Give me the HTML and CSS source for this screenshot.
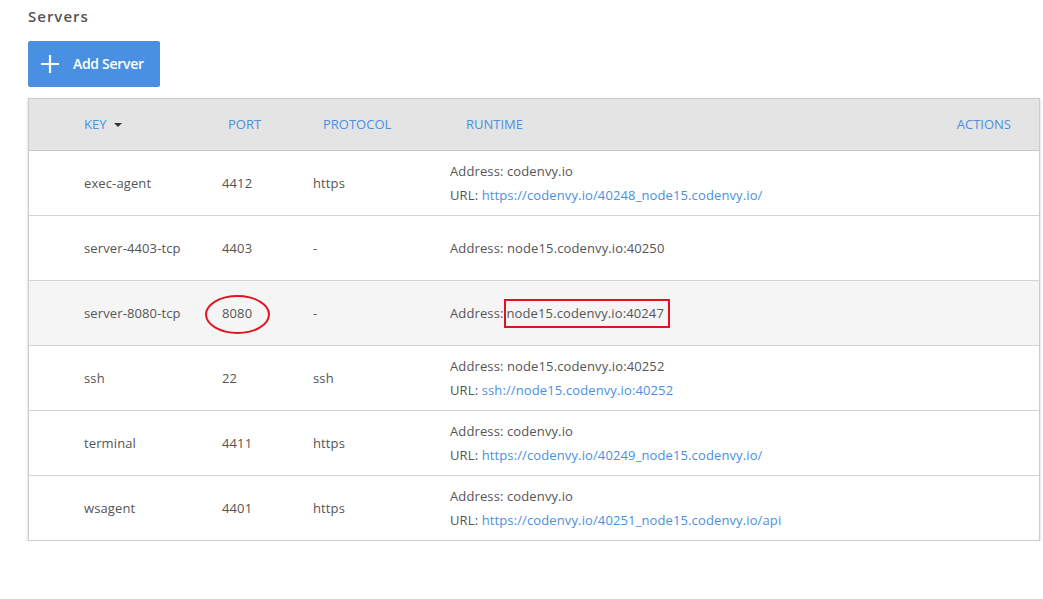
FILE: index.html
```html
<!DOCTYPE html>
<html>
<head>
<meta charset="utf-8">
<link rel="stylesheet" href="styles.css">
</head>
<body>
<div class="page">
  <h1 class="title">Servers</h1>
  <button class="add-btn"><svg class="plus" width="20" height="20" viewBox="0 0 20 20"><path d="M10 1v18M1 10h18" stroke="#fff" stroke-width="2.2" fill="none"/></svg><span>Add Server</span></button>
  <div class="table">
    <div class="head">
      <div class="h-key">KEY <span class="caret"></span></div>
      <div class="h-port">PORT</div>
      <div class="h-proto">PROTOCOL</div>
      <div class="h-run">RUNTIME</div>
      <div class="h-act">ACTIONS</div>
    </div>
    <div class="row">
      <div class="c-key">exec-agent</div>
      <div class="c-port">4412</div>
      <div class="c-proto">https</div>
      <div class="c-run"><div>Address: codenvy.io</div><div>URL: <a>https://codenvy.io/40248_node15.codenvy.io/</a></div></div>
    </div>
    <div class="row">
      <div class="c-key">server-4403-tcp</div>
      <div class="c-port">4403</div>
      <div class="c-proto">-</div>
      <div class="c-run"><div>Address: node15.codenvy.io:40250</div></div>
    </div>
    <div class="row hover">
      <div class="c-key">server-8080-tcp</div>
      <div class="c-port"><span class="circled">8080</span></div>
      <div class="c-proto">-</div>
      <div class="c-run"><div>Address:<span class="boxed">node15.codenvy.io:40247</span></div></div>
    </div>
    <div class="row">
      <div class="c-key">ssh</div>
      <div class="c-port">22</div>
      <div class="c-proto">ssh</div>
      <div class="c-run"><div>Address: node15.codenvy.io:40252</div><div>URL: <a>ssh://node15.codenvy.io:40252</a></div></div>
    </div>
    <div class="row">
      <div class="c-key">terminal</div>
      <div class="c-port">4411</div>
      <div class="c-proto">https</div>
      <div class="c-run"><div>Address: codenvy.io</div><div>URL: <a>https://codenvy.io/40249_node15.codenvy.io/</a></div></div>
    </div>
    <div class="row last">
      <div class="c-key">wsagent</div>
      <div class="c-port">4401</div>
      <div class="c-proto">https</div>
      <div class="c-run"><div>Address: codenvy.io</div><div>URL: <a>https://codenvy.io/40251_node15.codenvy.io/api</a></div></div>
    </div>
  </div>
</div>
</body>
</html>
```
FILE: styles.css
```css
* { box-sizing: border-box; }
html, body { margin: 0; padding: 0; background: #fff; }
body { font-family: "Open Sans", "Liberation Sans", sans-serif; color: #555; }
.page { padding: 5px 4px 0 28px; }
.title {
  margin: 0;
  font-size: 15px;
  font-weight: 600;
  letter-spacing: 1px;
  color: #555;
  line-height: 22px;
}
.add-btn {
  margin-top: 14px;
  display: flex;
  align-items: center;
  height: 46px;
  width: 132px;
  padding: 0 0 0 12px;
  border: none;
  border-radius: 2px;
  background: #4a90e2;
  color: #fff;
  font-family: "Open Sans", "Liberation Sans", sans-serif;
  font-size: 14px;
  font-weight: 600;
  letter-spacing: -0.3px;
  padding-bottom: 1px;
}
.plus { margin-right: 13px; }
.table {
  margin-top: 11px;
  width: 1012px;
  border: 1px solid #ccc;
  box-shadow: 0 1px 3px rgba(0,0,0,0.18);
  font-size: 13px;
  letter-spacing: 0.12px;
}
.head {
  display: grid;
  grid-template-columns: 144px 95px 143px 490px 1fr;
  height: 52px;
  align-items: center;
  background: #e4e4e4;
  border-bottom: 1px solid #c8c8c8;
  color: #4a90e2;
  padding-left: 55px;
  padding-bottom: 2px;
  letter-spacing: 0;
}
.h-act { text-align: right; padding-right: 28px; }
.caret {
  display: inline-block;
  width: 0; height: 0;
  border-left: 4px solid transparent;
  border-right: 4px solid transparent;
  border-top: 4px solid #333;
  margin-left: 4px;
  vertical-align: 2px;
}
.row {
  display: grid;
  grid-template-columns: 138px 91px 137px 1fr;
  height: 65px;
  align-items: center;
  border-bottom: 1px solid #d4d4d4;
  padding-left: 55px;
  color: #555;
}
.row.last { border-bottom: none; height: 64px; }
.row.hover { background: #f5f5f5; }
.c-run { line-height: 24px; }
.c-run a { color: #4a90e2; }
.circled {
  position: relative;
  display: inline-block;
}
.circled::after {
  content: "";
  position: absolute;
  left: -17px; top: -9px;
  width: 61px; height: 35px;
  border: 2px solid #e0141e;
  border-radius: 50%;
}
.boxed {
  display: inline-block;
  border: 2px solid #e0141e;
  padding: 0 4px 0 1px;
  line-height: 25px;
  margin-top: -4px;
  margin-bottom: -4px;
}
```
